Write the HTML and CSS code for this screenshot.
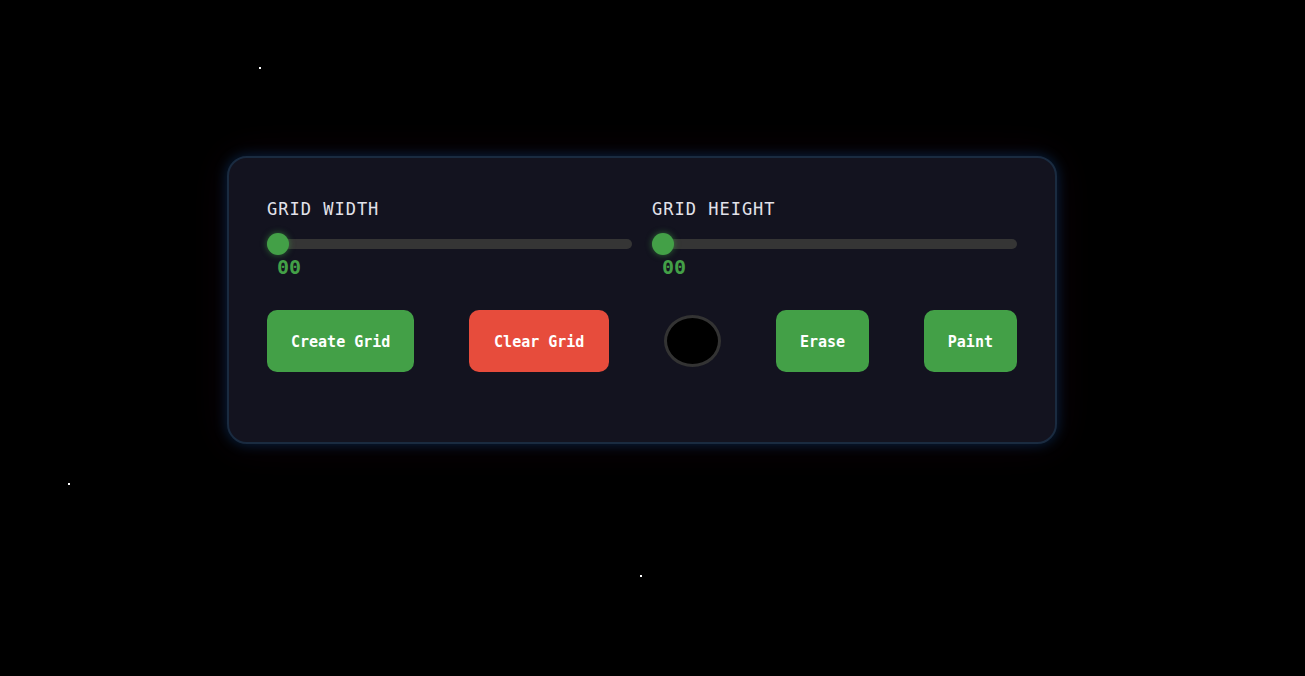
FILE: index.html
```html
<!DOCTYPE html>
<html>
<head>
<meta charset="utf-8">
<link rel="stylesheet" href="styles.css">
</head>
<body>
<div class="star s1"></div>
<div class="star s2"></div>
<div class="star s3"></div>
<div class="panel">
  <div class="sliders">
    <div class="field">
      <label class="label">GRID WIDTH</label>
      <input class="range" type="range" min="0" max="100" value="0">
      <div class="value">00</div>
    </div>
    <div class="field">
      <label class="label">GRID HEIGHT</label>
      <input class="range" type="range" min="0" max="100" value="0">
      <div class="value">00</div>
    </div>
  </div>
  <div class="actions">
    <button class="btn green">Create Grid</button>
    <button class="btn red">Clear Grid</button>
    <div class="swatch"></div>
    <button class="btn green">Erase</button>
    <button class="btn green">Paint</button>
  </div>
</div>
</body>
</html>
```
FILE: styles.css
```css
html, body {
  margin: 0;
  height: 100%;
  background: #000;
  overflow: hidden;
}
body {
  font-family: "DejaVu Sans Mono", monospace;
  position: relative;
}
.star {
  position: absolute;
  width: 2px;
  height: 2px;
  background: #fff;
}
.s1 { left: 259px; top: 67px; }
.s2 { left: 68px; top: 483px; }
.s3 { left: 640px; top: 575px; }

.panel {
  margin: 156px 0 0 227px;
  width: 830px;
  box-sizing: border-box;
  padding: 38px 38px 70px;
  background: #13131f;
  border: 2px solid #1a2b40;
  border-radius: 20px;
  box-shadow: 0 0 14px rgba(0, 120, 220, 0.3), 0 0 40px rgba(120, 0, 80, 0.14);
}
.sliders {
  display: grid;
  grid-template-columns: 1fr 1fr;
  column-gap: 20px;
}
.field {
  display: flex;
  flex-direction: column;
}
.label {
  font-size: 17px;
  line-height: 22px;
  letter-spacing: 1px;
  color: #e2e2ea;
  margin-top: 2px;
}
.range {
  -webkit-appearance: none;
  appearance: none;
  width: 100%;
  height: 22px;
  margin: 13px 0 0;
  background: transparent;
}
.range::-webkit-slider-runnable-track {
  height: 10px;
  background: #353535;
  border-radius: 5px;
}
.range::-webkit-slider-thumb {
  -webkit-appearance: none;
  width: 22px;
  height: 22px;
  margin-top: -6px;
  border-radius: 50%;
  background: #43a047;
  box-shadow: 0 0 6px rgba(67, 160, 71, 0.6);
  border: none;
}
.value {
  font-size: 20px;
  font-weight: bold;
  line-height: 24px;
  color: #43a047;
  margin-left: 10px;
}
.actions {
  display: flex;
  justify-content: space-between;
  align-items: center;
  margin-top: 31px;
}
.btn {
  font-family: "DejaVu Sans Mono", monospace;
  font-weight: bold;
  font-size: 15px;
  line-height: 22px;
  padding: 21px 24px 19px;
  border: none;
  border-radius: 10px;
  color: #fff;
}
.green { background: #43a047; }
.red { background: #e74c3c; padding-left: 25px; padding-right: 25px; }
.swatch {
  width: 51px;
  height: 46px;
  border: 3px solid #333;
  border-radius: 50%;
  background: #000;
}
```
